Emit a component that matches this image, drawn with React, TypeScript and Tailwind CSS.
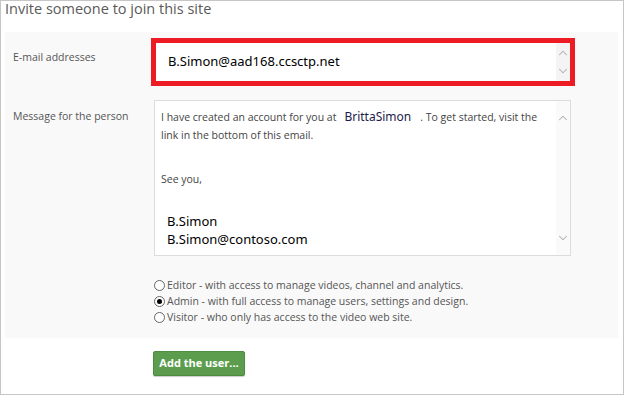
import { ChevronUp, ChevronDown } from 'lucide-react'

function Radio({ checked, label }: { checked?: boolean; label: string }) {
  return (
    <div className="flex items-center h-[16px]">
      <span className="w-[11px] h-[11px] rounded-full border border-[#666] bg-white flex items-center justify-center mr-[2px]">
        {checked && <span className="w-[5px] h-[5px] rounded-full bg-black"></span>}
      </span>
      <span>{label}</span>
    </div>
  )
}

function ScrollTrack({ className }: { className: string }) {
  return (
    <div className={`flex flex-col items-center justify-between ${className}`}>
      <ChevronUp className="w-[14px] h-[14px] text-[#adadad]" strokeWidth={1.8} />
      <ChevronDown className="w-[14px] h-[14px] text-[#adadad]" strokeWidth={1.8} />
    </div>
  )
}

export default function App() {
  return (
    <div className="w-[624px] h-[395px] bg-white border border-[#c6c6c6] overflow-hidden font-['Open_Sans',sans-serif] text-[#555]">
      <h1 className="pl-[4px] -mt-[2px] text-[14.5px] leading-[19px] text-[#5a5a5a]">Invite someone to join this site</h1>

      {/* Form panel */}
      <div className="ml-[4px] mt-[14px] w-[613px] h-[306px] bg-[#f9f9f9] pt-[6px] pl-[8px]">
        <div className="flex">
          <div className="w-[138px] pt-[11px] text-[10.5px] leading-[16px]">E-mail addresses</div>
          <div className="w-[424px] h-[48px] border-[5px] border-[#ed1c24] bg-white flex items-center">
            <div className="flex-1 pl-[12px] text-[13px] text-black font-['Noto_Sans',sans-serif]">B.Simon@aad168.ccsctp.net</div>
            <ScrollTrack className="w-[14px] h-full py-[3px] bg-[#f4f4f4]" />
          </div>
        </div>

        <div className="flex mt-[14px]">
          <div className="w-[141px] pt-[8px] text-[10.5px] leading-[16px]">Message for the person</div>
          <div className="w-[417px] h-[156px] border border-[#dcdcdc] bg-white flex">
            <div className="flex-1 pl-[6px] pt-[7px] text-[10.5px] leading-[18px] text-[#444]">
              <div className="flex items-center whitespace-nowrap">
                I have created an account for you at
                <span className="ml-[8px] mr-[9px] text-[12px] text-[#1b1b4b] font-['Noto_Sans',sans-serif]">BrittaSimon</span>
                . To get started, visit the
              </div>
              <div>link in the bottom of this email.</div>
              <div className="mt-[26px]">See you,</div>
              <div className="mt-[24px] pl-[6px] text-[13px] leading-[18px] text-black font-['Noto_Sans',sans-serif]">
                <div>B.Simon</div>
                <div>B.Simon@contoso.com</div>
              </div>
            </div>
            <ScrollTrack className="w-[14px] h-full pt-[10px] pb-[10px] bg-[#fafafa]" />
          </div>
        </div>

        <div className="ml-[141px] mt-[21px] text-[10.5px] leading-[16px]">
          <Radio label="Editor - with access to manage videos, channel and analytics." />
          <Radio checked label="Admin - with full access to manage users, settings and design." />
          <Radio label="Visitor - who only has access to the video web site." />
        </div>
      </div>

      <div className="pl-[152px] mt-[11px]">
        <button className="w-[92px] h-[25px] rounded-[2px] bg-[#5b9d4c] border border-[#4f8c42] shadow-[0_1px_1px_rgba(0,0,0,0.2)] text-white text-[11px] font-bold">
          Add the user...
        </button>
      </div>
    </div>
  )
}
